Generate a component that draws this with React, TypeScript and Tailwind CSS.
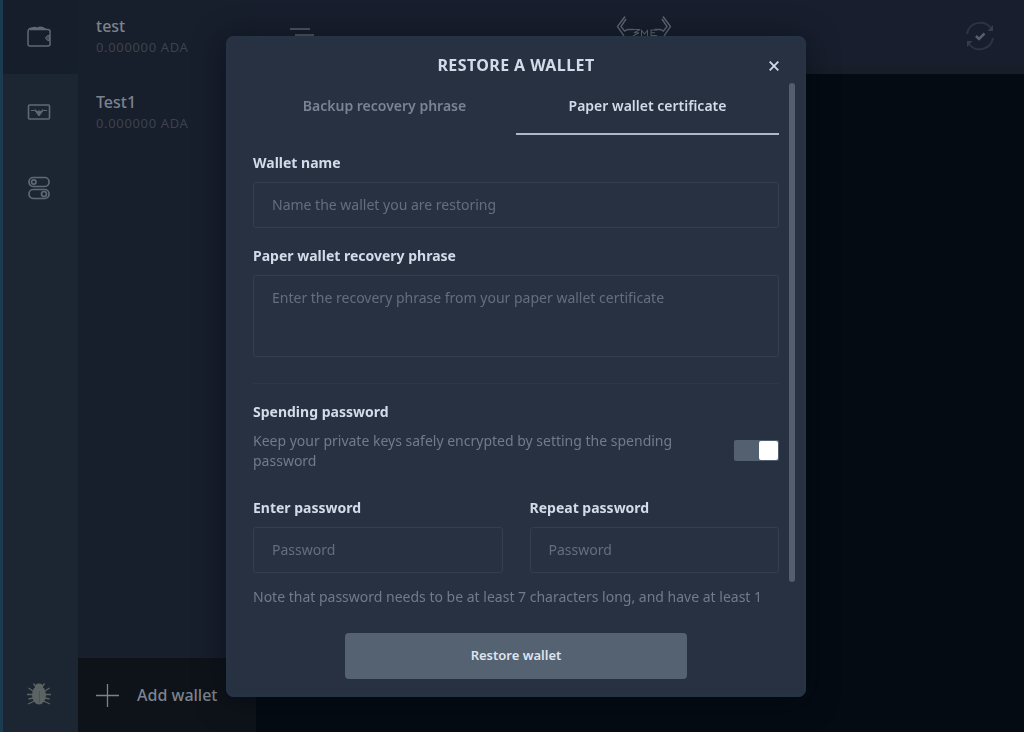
import { useState } from "react";
import type { ReactNode } from "react";

const wallets = [
  { name: "test", balance: "0.000000 ADA" },
  { name: "Test1", balance: "0.000000 ADA" },
];

const labelClass = "block text-sm leading-5 font-bold text-[#d3dbe9]";

const fieldClass =
  "block w-full rounded-[3px] border border-[#333e4f] bg-transparent px-[18px] text-sm text-[#dfe6f2] placeholder:text-[#636e7f] outline-none focus:border-[#667182]";

function WalletIcon() {
  return (
    <svg width="24" height="24" viewBox="0 0 24 24" fill="none" stroke="currentColor" strokeWidth="1.5" strokeLinejoin="round">
      <path d="M2.500 4.500h18a2 2 0 0 1 2 2v12.500a2 2 0 0 1-2 2h-18a2 2 0 0 1-2-2v-12.500c0-1.500.8-2.500 2-3l5-1 2 1 3-1.200 3 .5 3 1.700" transform="translate(.5 0)" />
      <path d="M4 3.800l5-.5 3 .5 4-.7" />
      <path d="M22.500 10.500h-2l-2 2.500 2 2.500h2z" fill="currentColor" fillOpacity="0.6" strokeWidth="1" />
    </svg>
  );
}

function CertificateIcon() {
  return (
    <svg width="24" height="24" viewBox="0 0 24 24" fill="none" stroke="currentColor" strokeWidth="1.600">
      <rect x="1.500" y="5" width="21" height="14" rx="1" />
      <path d="M4 10.500h3l1.500-1M20 10.500h-3l-1.500-1" strokeWidth="1" />
      <path d="M8 10.500l3 1 1-1 1 1 3-1-4 5.500z" fill="currentColor" strokeWidth="1" />
    </svg>
  );
}

function TogglesIcon() {
  return (
    <svg width="24" height="24" viewBox="0 0 24 24" fill="none" stroke="currentColor" strokeWidth="1.700">
      <rect x="2" y="1.500" width="20" height="9" rx="4.200" />
      <circle cx="6.800" cy="6" r="2.200" />
      <rect x="2" y="13.500" width="20" height="9" rx="4.200" />
      <circle cx="17" cy="18" r="2.500" />
    </svg>
  );
}

function BugIcon() {
  return (
    <svg width="24" height="24" viewBox="0 0 24 24" fill="none" stroke="currentColor" strokeWidth="1.300">
      <path d="M9 5L6.500 1.500M15 5l2.500-3.500M6 9L1.500 6M6 12.500H0M6 16l-4.500 1M7.500 19L1 22M18 9l4.500-3M18 12.500h6M18 16l4.500 1M16.500 19l6.500 3" />
      <ellipse cx="12" cy="13" rx="7" ry="9.500" fill="currentColor" stroke="none" />
      <path d="M8 5.500a4 4 0 0 1 8 0z" fill="currentColor" stroke="none" />
      <path d="M12.500 9v12" stroke="#4d5556" strokeWidth="1" />
    </svg>
  );
}

function Logo() {
  return (
    <svg width="56" height="42" viewBox="0 0 56 42" fill="none" stroke="currentColor" strokeWidth="1.400" aria-hidden="true">
      <path d="M9 .5L1.500 10.500 8 20M10 3L5 10.500l3.500 4.500 3-1.500h6" />
      <path d="M47 .5l7.500 10L48 20M46 3l5 7.500-3.500 4.500-3-1.500h-6" />
      <path d="M16 13.500h8l-6 3.200h5l-6 3.300M25.500 20v-5.500l3 3.500 3-3.500V20M41 14h-6v5.500h6M35 16.700h4" strokeWidth="1.100" />
    </svg>
  );
}

function SyncIcon() {
  return (
    <svg width="32" height="32" viewBox="0 0 32 32" fill="none" aria-hidden="true">
      <path d="M3 14A13.500 13.500 0 0 1 27 8M29 18A13.500 13.500 0 0 1 5 24" stroke="#2b3442" strokeWidth="2" />
      <path d="M29 5v6h-5.500zM3 27v-6h5.500z" fill="#343d4b" />
      <path d="M12 16l3 3 5.500-5.500" stroke="#565e6b" strokeWidth="2.500" />
    </svg>
  );
}

function RailButton({ label, active, children }: { label: string; active?: boolean; children: ReactNode }) {
  return (
    <button
      type="button"
      aria-label={label}
      className={`flex w-full items-center justify-center pr-[3px] text-[#5f6974] ${active ? "h-[74px] bg-[#171e2b]" : "h-[76px]"}`}
    >
      {children}
    </button>
  );
}

function PasswordField({ id, label }: { id: string; label: string }) {
  return (
    <div className="min-w-0 flex-1">
      <label htmlFor={id} className={`${labelClass} mb-[9px]`}>{label}</label>
      <input id={id} type="password" placeholder="Password" className={`${fieldClass} h-[46px]`} />
    </div>
  );
}

function RestoreDialog() {
  const [tab, setTab] = useState(1);
  const tabs = ["Backup recovery phrase", "Paper wallet certificate"];
  return (
    <div className="fixed inset-0 flex items-center justify-center pl-2">
      <section
        role="dialog"
        aria-modal="true"
        aria-labelledby="dialog-title"
        className="relative flex max-h-full w-[580px] flex-col rounded-lg bg-[#283142] text-[#d3dbe9] shadow-[0_4px_30px_rgba(0,8,14,0.5)] inset-ring-3 inset-ring-[#263344]"
      >
        <header className="relative flex justify-center pt-[17px] pb-1.5">
          <h1 id="dialog-title" className="text-base leading-6 font-bold tracking-wide">RESTORE A WALLET</h1>
          <button type="button" aria-label="Close" className="absolute top-5 right-[22px] flex size-5 items-center justify-center">
            <svg width="10" height="10" viewBox="0 0 10 10" stroke="currentColor" strokeWidth="1.800">
              <path d="M.7.7l8.600 8.600M9.300.7L.7 9.300" />
            </svg>
          </button>
        </header>
        <div className="relative min-h-0 flex-1 overflow-y-auto px-[27px] pb-1">
          <div role="tablist" className="flex">
            {tabs.map((t, i) => (
              <button
                key={t}
                type="button"
                role="tab"
                aria-selected={tab === i}
                onClick={() => setTab(i)}
                className={`h-[52px] flex-1 border-b-2 pb-1 text-sm font-semibold ${
                  tab === i ? "border-[#b0b8c6] text-[#d3dbe9]" : "border-transparent text-[#7a8494]"
                }`}
              >
                {t}
              </button>
            ))}
          </div>
          <label htmlFor="wallet-name" className={`${labelClass} mt-[18px] mb-[9px]`}>Wallet name</label>
          <input id="wallet-name" type="text" placeholder="Name the wallet you are restoring" className={`${fieldClass} h-[46px]`} />
          <label htmlFor="phrase" className={`${labelClass} mt-[18px] mb-[9px]`}>Paper wallet recovery phrase</label>
          <textarea
            id="phrase"
            placeholder="Enter the recovery phrase from your paper wallet certificate"
            className={`${fieldClass} h-[82px] resize-none py-3 leading-5`}
          />
          <div className="mt-[26px] border-t border-[#2c3748] pt-[18px]">
            <label htmlFor="spending" className={labelClass}>Spending password</label>
            <div className="mt-[9px] flex items-center justify-between">
              <p className="w-[430px] text-sm leading-5 text-[#717b8b]">
                Keep your private keys safely encrypted by setting the spending password
              </p>
              <input
                id="spending"
                type="checkbox"
                role="switch"
                defaultChecked
                className="flex h-[21px] w-[45px] shrink-0 appearance-none rounded-xs bg-[#536070] p-px before:size-[19px] before:rounded-xs before:bg-white checked:justify-end"
              />
            </div>
          </div>
          <div className="mt-[27px] flex gap-[27px]">
            <PasswordField id="password" label="Enter password" />
            <PasswordField id="repeat" label="Repeat password" />
          </div>
          <p className="mt-3.5 text-sm leading-5 text-[#717b8b]">
            Note that password needs to be at least 7 characters long, and have at least 1
          </p>
        </div>
        <div className="absolute top-[47px] right-[11px] bottom-[115px] w-1.5 rounded-full bg-[#535e6f]" />
        <footer className="flex justify-center pt-[22px] pb-[18px]">
          <button type="button" className="h-[46px] w-[342px] rounded-sm bg-[#556272] text-[13px] font-semibold text-[#dde5ee]">
            Restore wallet
          </button>
        </footer>
      </section>
    </div>
  );
}

export default function App() {
  return (
    <div className="flex h-screen bg-[#040b13] font-['Noto_Sans',sans-serif]">
      <nav className="flex w-[78px] shrink-0 flex-col border-l-3 border-[#1b3b50] bg-[#1c2633]">
        <RailButton label="Wallets" active><WalletIcon /></RailButton>
        <RailButton label="Certificates"><CertificateIcon /></RailButton>
        <RailButton label="Settings"><TogglesIcon /></RailButton>
        <div className="mt-auto [&>button]:text-[#5c6363]">
          <RailButton label="Report a bug"><BugIcon /></RailButton>
        </div>
      </nav>
      <aside className="flex w-[178px] shrink-0 flex-col bg-[#171e2c]">
        <ul>
          {wallets.map((w) => (
            <li key={w.name}>
              <a href="#" className="flex h-[76px] flex-col pt-3.5 pl-[18px]">
                <span className="text-base leading-6 font-medium text-[#7d838e]">{w.name}</span>
                <span className="text-[13px] leading-[18px] tracking-wider text-[#3b4350]">{w.balance}</span>
              </a>
            </li>
          ))}
        </ul>
        <button type="button" className="mt-auto flex h-[74px] items-center gap-[18px] bg-[#0e131a] pl-[18px] text-base font-medium text-[#7d838c]">
          <svg width="23" height="23" viewBox="0 0 23 23" stroke="currentColor" strokeWidth="1.300">
            <path d="M11.500 0v23M0 11.500h23" />
          </svg>
          Add wallet
        </button>
      </aside>
      <main className="min-w-0 flex-1">
        <header className="flex h-[74px] justify-between border-b-8 border-[#161e28] bg-[#181e2d] pr-7 pl-[34px] text-[#5d6570]">
          <button type="button" aria-label="Menu" className="mt-7 h-[18px]">
            <svg width="25" height="18" viewBox="0 0 25 18" stroke="currentColor" strokeWidth="1.500">
              <path d="M0 1h20M5 7h19M0 14h20" />
            </svg>
          </button>
          <div className="mt-4 pl-2"><Logo /></div>
          <div className="mt-5"><SyncIcon /></div>
        </header>
      </main>
      <RestoreDialog />
    </div>
  );
}
